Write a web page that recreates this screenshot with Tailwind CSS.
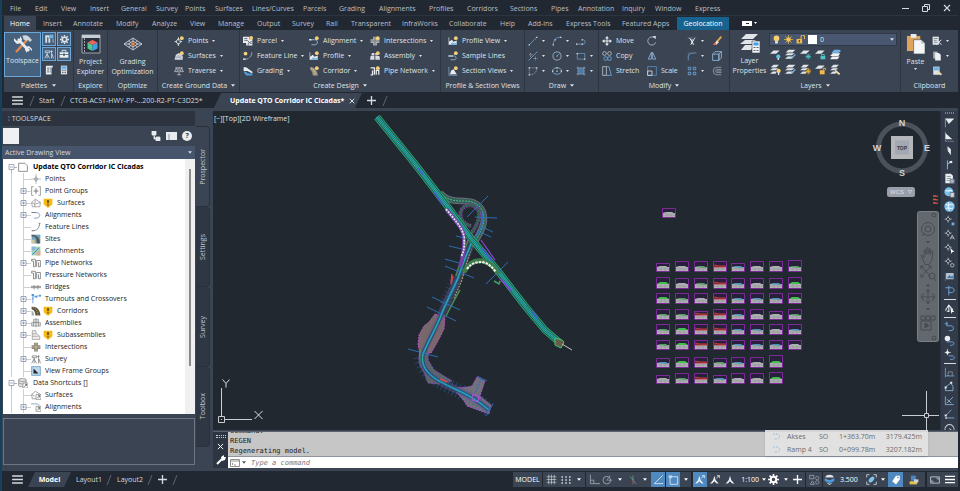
<!DOCTYPE html>
<html lang="en">
<head>
    <meta charset="UTF-8">
    <meta name="viewport" content="width=device-width, initial-scale=1.0">
    <title>Update QTO Corridor IC Cicadas</title>
    <script src="https://cdn.jsdelivr.net/npm/@tailwindcss/browser@4"></script>
</head>
<body class="bg-[#222832] font-['Open_Sans','Noto_Sans',sans-serif] text-[7px] leading-[10px] text-[#d5d9df]">

<!-- Icon library -->
<svg class="hidden">
    <symbol id="caret" viewBox="0 0 6 4"><path d="M0 0h6L3 4z" fill="currentColor"/></symbol>
    <symbol id="menu" viewBox="0 0 12 10"><path d="M0 1.2h12M0 5h12M0 8.8h12" stroke="currentColor" stroke-width="1.6"/></symbol>
    <symbol id="plus" viewBox="0 0 10 10"><path d="M5 0v10M0 5h10" stroke="currentColor" stroke-width="1.5"/></symbol>
    <symbol id="close" viewBox="0 0 8 8"><path d="M1 1l6 6M7 1L1 7" stroke="currentColor" stroke-width="1.1"/></symbol>
    <symbol id="slash" viewBox="0 0 6 10"><path d="M5 0L1 10" stroke="#5b6370" stroke-width="1"/></symbol>

    <symbol id="tools" viewBox="0 0 20 20"><path d="M3 18L14 6" stroke="#e0894b" stroke-width="2.4"/><path d="M9 2c4-2 7 0 8 2l2 2-2 2-2-2-2 1-3-2c1-1 0-2-1-3z" fill="#cfd5db"/><path d="M5 5l11 12" stroke="#e8ecef" stroke-width="2.6"/><path d="M1 4l3 3 3-1 0-4 2 3-1 4-4 1-3-3zM19 17l-3-3-2 1v4l-2-3 1-3 3-1 3 3z" fill="#e8ecef"/></symbol>
    <symbol id="panels" viewBox="0 0 16 16"><path d="M2 2v12h3V5h2v9h3V8h4v6h1V8H9V2z" fill="#d8dde2"/><path d="M9 1h6v6H9z" fill="#6fb1e2"/></symbol>
    <symbol id="gear" viewBox="0 0 16 16"><circle cx="8" cy="8" r="4" fill="none" stroke="currentColor" stroke-width="3"/><path d="M8 0v3M8 13v3M0 8h3M13 8h3M2.3 2.3l2.2 2.2M11.5 11.5l2.2 2.2M2.3 13.7l2.2-2.2M11.5 4.500l2.200-2.200" stroke="currentColor" stroke-width="2.4"/></symbol>
    <symbol id="survey" viewBox="0 0 16 16"><path d="M2 3h7v3H2zM5 6v2M5 8L1 15M5 8l4 7M5 8v7M12 2v13M10 4h4M13 8l2 7" stroke="currentColor" stroke-width="1.2" fill="none"/></symbol>
    <symbol id="toolbox" viewBox="0 0 16 16"><path d="M1 5h14v3H1zM1 9h14v5H1z" fill="#e8ecef"/><path d="M5 5V2h6v3" stroke="#e8ecef" stroke-width="1.5" fill="none"/><path d="M7 7h2v4H7z" fill="#3b4453"/></symbol>
    <symbol id="sheet" viewBox="0 0 16 16"><path d="M3 1h11v3h-2v11H3z" fill="#e8ecef"/><path d="M5 5h3M5 8h3M5 11h3M9 5h2M9 8h2M9 11h2" stroke="#4b5462" stroke-width="1.3"/></symbol>
    <symbol id="calc" viewBox="0 0 16 16"><path d="M3 1h10v14H3z" fill="#d8dde2"/><path d="M4 2h8v5H4z" fill="#6fb1e2"/><path d="M5 9h2M9 9h2M5 12h2M9 12h2" stroke="#4b5462" stroke-width="1.6"/></symbol>
    <symbol id="explorer" viewBox="0 0 20 20"><path d="M1 1h18v18H1z" fill="#2a313c" stroke="#9da5af"/><path d="M1 1h18v3H1z" fill="#c8cdd3"/><path d="M3.500 4v15" stroke="#9da5af" stroke-dasharray="2 1"/><path d="M11.500 6l5 2.500-5 2.500-5-2.500z" fill="#f0645a"/><path d="M6.500 8.500l5 2.500v6l-5-2.500z" fill="#4dc98a"/><path d="M16.500 8.500l-5 2.500v6l5-2.500z" fill="#3f9fe6"/></symbol>
    <symbol id="grading" viewBox="0 0 20 14"><path d="M10 1l9 6-9 6-9-6zM5.500 4l9 6M14.500 4l-9 6M10 1v12M1 7h18" fill="none" stroke="#c8cdd4" stroke-width=".9"/><path d="M10 4l4.500 3L10 10 5.500 7z" fill="#3b4453" stroke="#e9edf0" stroke-width=".8"/><circle cx="10" cy="7" r="1.800" fill="#f08a3c"/></symbol>

    <symbol id="points" viewBox="0 0 16 16"><path d="M7 4l4 5-4 5-4-5zM7 2v14M1 9h12" stroke="#d8dde2" stroke-width="1.5" fill="none"/><circle cx="7" cy="9" r="2" fill="#3b4453"/><circle cx="12.500" cy="3.500" r="3" fill="#f6cf7a"/></symbol>
    <symbol id="surfaces" viewBox="0 0 16 16"><path d="M1 14l2-8 5-3 6 5v6z" fill="#d8dde2"/><path d="M3 12c2-3 6-2 9 0M4 9c2-2 5-1 8 0" stroke="#7c8693" fill="none"/><circle cx="12.500" cy="3.500" r="3" fill="#f6cf7a"/></symbol>
    <symbol id="traverse" viewBox="0 0 16 16"><path d="M2 3h12M8 2v12M5 14h6M4 3L1 9h5zM12 3l-2 6h5z" stroke="#c8cdd4" stroke-width="1.200" fill="none"/></symbol>
    <symbol id="parcel" viewBox="0 0 16 16"><path d="M0 1h10v4h5v10H5v-4H0z" fill="#e8ecef"/><path d="M2 4h5M2 7h5c2 0 2 6 7 5M8 15c0-4 3-6 7-6" stroke="#4b5462" stroke-width="1.200" fill="none"/><circle cx="13" cy="3" r="3" fill="#f6cf7a"/></symbol>
    <symbol id="fline" viewBox="0 0 16 16"><path d="M1 13c7 1 12-3 13-9M14 2v2" stroke="#9fb4c8" stroke-width="1.400" stroke-dasharray="8 2" fill="none"/><circle cx="4" cy="4" r="3" fill="#f6cf7a"/><path d="M0 13h4" stroke="#e8ecef" stroke-width="2"/></symbol>
    <symbol id="gradingi" viewBox="0 0 16 16"><path d="M1 2l4 0 10 7v3L7 8H1z" fill="#e8ecef"/><path d="M1 9c3-1 5 2 8 3h6v3H5z" fill="#4b9ce0"/></symbol>
    <symbol id="align" viewBox="0 0 16 16"><path d="M1 6h8c6 0 6 8 0 8H4" stroke="#8fb7dc" stroke-width="1.500" fill="none"/><path d="M0 6h4" stroke="#e8ecef" stroke-width="2"/><circle cx="12.500" cy="3.500" r="3" fill="#f6cf7a"/></symbol>
    <symbol id="profile" viewBox="0 0 16 16"><path d="M1 2h1v7l4-3 3 3 5-2v7H1z" fill="#e8ecef"/><path d="M3 14l4-4 4 2 3-2v4z" fill="#6fb1e2"/><circle cx="12.500" cy="3.500" r="3" fill="#f6cf7a"/></symbol>
    <symbol id="corridor" viewBox="0 0 16 16"><path d="M2 2h3c5 2 9 7 9 13H6C6 10 4 7 2 6z" fill="#a39a82"/><path d="M3 3c5 2 7 7 7 12" stroke="#ecd9a0" stroke-dasharray="2 1.500" fill="none"/><circle cx="12.500" cy="3.500" r="3" fill="#f6cf7a"/></symbol>
    <symbol id="inter" viewBox="0 0 16 16"><path d="M5 1h6v4h4v6h-4v4H5v-4H1V5h4z" fill="#aeb2ae"/><path d="M8 1v14M1 8h14" stroke="#5d6570"/><circle cx="12.500" cy="3.500" r="3" fill="#f6cf7a"/></symbol>
    <symbol id="assembly" viewBox="0 0 16 16"><path d="M1 8h6v6H0zM8.500 8H15l1 6H8.500zM3 3h4v4H2zM8.500 3H12v4H8.500z" fill="#d8dde2"/><circle cx="12.500" cy="3.500" r="3" fill="#f6cf7a"/></symbol>
    <symbol id="pipe" viewBox="0 0 16 16"><path d="M1 3h6v11M4 7v7H1M10 14V7h4v7" stroke="#e8ecef" stroke-width="2" fill="none"/><circle cx="12.500" cy="3.500" r="3" fill="#f6cf7a"/></symbol>
    <symbol id="sline" viewBox="0 0 16 16"><path d="M0 8h10M4 14h6c4 0 4-6 0-6" stroke="#8fb7dc" stroke-width="1.400" fill="none"/><path d="M1 8h7" stroke="#e8ecef" stroke-width="1.500"/><circle cx="12.500" cy="3.500" r="3" fill="#f6cf7a"/></symbol>
    <symbol id="sview" viewBox="0 0 16 16"><path d="M1 1h1v13h13v1H1z" fill="#8fb7dc"/><path d="M3 13l2-6 4-2 5 8z" fill="#e8ecef"/><circle cx="12.500" cy="3.500" r="3" fill="#f6cf7a"/></symbol>

    <symbol id="d-line" viewBox="0 0 16 16"><path d="M2 14L14 2" stroke="#6fa3d4" stroke-width="1.200"/><path d="M1 13h2v2H1zM13 1h2v2h-2z" fill="#dfe4e9"/></symbol>
    <symbol id="d-arc" viewBox="0 0 16 16"><path d="M2 14C2 7 6 2 14 2" stroke="#6fa3d4" stroke-width="1.200" fill="none"/><path d="M1 13h2v2H1zM13 1h2v2h-2zM4 5h2v2H4z" fill="#dfe4e9"/></symbol>
    <symbol id="d-pline" viewBox="0 0 16 16"><path d="M1 13h10c5 0 5-7 0-7" stroke="#6fa3d4" stroke-width="1.300" fill="none"/><path d="M0 12h2v2H0zM9 12h2v2H9zM9 5h2v2H9z" fill="#dfe4e9"/></symbol>
    <symbol id="d-cons" viewBox="0 0 16 16"><path d="M1 15L15 1" stroke="#6fa3d4" stroke-width="1.300"/><path d="M2 6h6M4 3v6M9 12h6M12 9v6" stroke="#c8cdd4" stroke-dasharray="1.500 1"/></symbol>
    <symbol id="d-circle" viewBox="0 0 16 16"><circle cx="8" cy="8" r="6.500" fill="none" stroke="#b7c4d2" stroke-width="1.200"/><path d="M8 8l4-4" stroke="#6fa3d4" stroke-width="1.300"/><path d="M7 7h2v2H7z" fill="#6fb1e2"/></symbol>
    <symbol id="d-rect" viewBox="0 0 16 16"><path d="M2 4h12v9H2z" fill="none" stroke="#6fa3d4" stroke-width="1.100"/><path d="M1 3h2v2H1zM13 12h2v2h-2z" fill="#dfe4e9"/></symbol>
    <symbol id="d-poly" viewBox="0 0 16 16"><path d="M2 3h12c0 7-4 11-12 11z" fill="none" stroke="#8fa9c2" stroke-width="1.100" stroke-dasharray="3 1"/><path d="M1 2h2v2H1zM13 2h2v2h-2zM1 13h2v2H1z" fill="#dfe4e9"/></symbol>
    <symbol id="d-ell" viewBox="0 0 16 16"><ellipse cx="8" cy="8" rx="7" ry="5" fill="none" stroke="#8fb7dc" stroke-width="1.200"/><path d="M7 7h2v2H7zM7 2h2v2H7zM0 7h2v2H0zM14 7h2v2h-2z" fill="#dfe4e9"/></symbol>
    <symbol id="d-hatch" viewBox="0 0 16 16"><path d="M3 3h10v10H3z" fill="#4d7ba8"/><path d="M1 3h14M1 13h14M3 1v14M13 1v14" stroke="#c8cdd4" stroke-dasharray="1.500 1"/></symbol>

    <symbol id="m-move" viewBox="0 0 16 16"><path d="M8 3v10M3 8h10" stroke="#e8ecef" stroke-width="1.600"/><path d="M8 0l3 4H5zM8 16l3-4H5zM0 8l4-3v6zM16 8l-4-3v6z" fill="#e8ecef"/></symbol>
    <symbol id="m-copy" viewBox="0 0 16 16"><circle cx="4" cy="4" r="3" fill="none" stroke="#c8cdd4" stroke-width="1.200"/><circle cx="12" cy="4" r="3" fill="none" stroke="#c8cdd4" stroke-width="1.200"/><circle cx="6" cy="12" r="3" fill="none" stroke="#6fb1e2" stroke-width="1.300"/><circle cx="12" cy="12" r="3" fill="none" stroke="#6fb1e2" stroke-width="1.300"/></symbol>
    <symbol id="m-stretch" viewBox="0 0 16 16"><path d="M1 1h6v14H1z" fill="none" stroke="#c8cdd4" stroke-width="1.200"/><path d="M7 1h4l4 14H7" fill="none" stroke="#6fb1e2" stroke-width="1.300"/></symbol>
    <symbol id="m-rotate" viewBox="0 0 16 16"><path d="M12 3A6.500 6.500 0 1 0 14 10" fill="none" stroke="#a9bccf" stroke-width="1.400"/><path d="M9 0h5v5z" fill="#dfe4e9"/></symbol>
    <symbol id="m-mirror" viewBox="0 0 16 16"><path d="M7 2v11H2zM9 2v11h5z" fill="none" stroke="#8fb7dc" stroke-width="1.300"/></symbol>
    <symbol id="m-scale" viewBox="0 0 16 16"><path d="M1 1h14v14H1z" fill="none" stroke="#5f9bd2" stroke-width="1.100"/><path d="M1 8h7v7H1z" fill="none" stroke="#dfe4e9" stroke-width="1.300"/></symbol>
    <symbol id="m-trim" viewBox="0 0 16 16"><path d="M1 3h14" stroke="#8fa9c2" stroke-dasharray="2 1"/><path d="M4 3l7 11M12 4L6 14M8 5v8" stroke="#e8ecef" stroke-width="1.600"/></symbol>
    <symbol id="m-fillet" viewBox="0 0 16 16"><path d="M2 15V10C2 5 6 3 15 3" fill="none" stroke="#6fa3d4" stroke-width="1.300"/><path d="M2 9V3h6" stroke="#8b95a1" fill="none" stroke-dasharray="1.500 1"/></symbol>
    <symbol id="m-array" viewBox="0 0 16 16"><path d="M2 2h4v4H2zM10 2h4v4h-4zM2 10h4v4H2zM10 10h4v4h-4z" fill="none" stroke="#6fa3d4" stroke-width="1.400"/></symbol>
    <symbol id="m-erase" viewBox="0 0 16 16"><path d="M15 1L8 9" stroke="#e8a84c" stroke-width="3"/><path d="M8 7l3 3-4 4H2z" fill="#f1e4cf"/><path d="M1 14l4-4 2 4z" fill="#e2574c"/></symbol>
    <symbol id="m-box" viewBox="0 0 16 16"><path d="M1 5h10v10H1zM5 1h10v10l-4 4V5l4-4M1 5l4-4" fill="none" stroke="#8fb7dc" stroke-width="1.400"/></symbol>
    <symbol id="m-offset" viewBox="0 0 16 16"><path d="M15 2H8a6 6 0 0 0 0 12h7M15 5.500H8.500a2.500 2.500 0 0 0 0 5H15M15 8H8" fill="none" stroke="#a9b4c0" stroke-width="1.100"/></symbol>

    <symbol id="layerprops" viewBox="0 0 20 20"><path d="M6 1h12l-5 5H1zM5 7h11l-4 4H0zM5 12h9l-3 5H1z" fill="#e1e5e9"/><path d="M12 8h8v12h-8z" fill="#f2f4f6" stroke="#3b4453" stroke-width=".6"/><path d="M13.500 9.500h5v3h-5z" fill="#3f9fe6"/><path d="M13.500 14.500h2M16.500 14.500h2M13.500 17.500h2M16.500 17.500h2" stroke="#5d6570"/></symbol>
    <symbol id="bulb" viewBox="0 0 16 16"><circle cx="8" cy="6" r="5" fill="#f9d16c"/><path d="M5.500 11h5v4h-5z" fill="#e8ecef"/></symbol>
    <symbol id="sun" viewBox="0 0 16 16"><circle cx="8" cy="8" r="4" fill="#f7c552"/><path d="M8 0v16M0 8h16M2.500 2.500l11 11M13.500 2.500l-11 11" stroke="#f7c552" stroke-width="1.200"/></symbol>
    <symbol id="lock" viewBox="0 0 16 16"><path d="M1 7h10v8H1z" fill="#f2b84b"/><path d="M9 7V3a3 3 0 0 1 6 0v4" fill="none" stroke="#f2b84b" stroke-width="1.800"/><path d="M5 9h2v4H5z" fill="#3b4453"/></symbol>
    <symbol id="ly1" viewBox="0 0 16 16"><path d="M5 2h9l-5 5H0z" fill="#dfe4e9"/><circle cx="12" cy="11" r="3" fill="#5cc6e8"/><path d="M11 13h2v3h-2z" fill="#dfe4e9"/></symbol>
    <symbol id="ly2" viewBox="0 0 16 16"><path d="M5 1h10l-4 4H1zM4 6h10l-4 3H0zM4 11h9l-3 3H0z" fill="#dfe4e9"/><path d="M15 8l-6 6" stroke="#6fb1e2" stroke-width="2"/></symbol>
    <symbol id="ly3" viewBox="0 0 16 16"><path d="M5 2h9l-5 5H0z" fill="#dfe4e9"/><path d="M12 7v8M8 11h8M9 8l6 6M15 8l-6 6" stroke="#4fc3c7" stroke-width="1.300"/></symbol>
    <symbol id="ly4" viewBox="0 0 16 16"><path d="M5 2h9l-5 5H0z" fill="#dfe4e9"/><path d="M8 10h7v5H8z" fill="#4fc3c7"/><path d="M9.500 10V8h4v2" stroke="#4fc3c7" fill="none" stroke-width="1.300"/></symbol>
    <symbol id="ly5" viewBox="0 0 16 16"><path d="M6 1h8l2 2-4 3H2z" fill="#6fb1e2"/><path d="M4 6h11l-3 4H0zM3 11h11l-3 4H0z" fill="#f0f2f4"/></symbol>
    <symbol id="ly6" viewBox="0 0 16 16"><path d="M5 1h8l-4 4H1zM4 6h8l-4 3H0zM4 11h6l-2 3H0z" fill="#dfe4e9"/><circle cx="12.500" cy="10" r="3" fill="#f9d16c"/><path d="M11.500 12h2v4h-2z" fill="#dfe4e9"/></symbol>
    <symbol id="ly7" viewBox="0 0 16 16"><path d="M5 1h8l-4 4H1zM4 6h8l-4 3H0zM4 11h6l-2 3H0z" fill="#dfe4e9"/><path d="M12 6v9M8 10.500h8M9 7.500l6 6M15 7.500l-6 6" stroke="#f7b733" stroke-width="1.300"/></symbol>
    <symbol id="ly8" viewBox="0 0 16 16"><path d="M5 2h9l-5 5H0z" fill="#dfe4e9"/><path d="M7 9h7v6H7z" fill="#f2b84b"/><path d="M12 9V6h3v3" stroke="#f2b84b" fill="none" stroke-width="1.300"/></symbol>
    <symbol id="ly9" viewBox="0 0 16 16"><path d="M5 1h8l-4 4H1zM4 6h8l-4 3H0zM4 11h6l-2 3H0z" fill="#dfe4e9"/><path d="M8 8l7 6-2 2-6-5z" fill="#f0dca8"/></symbol>
    <symbol id="paste" viewBox="0 0 20 22"><path d="M1 3h14v16H1z" fill="#dca45c"/><path d="M5 1h6v4H5z" fill="#e8ecef"/><path d="M8 7h8l4 4v11H8z" fill="#f3f5f7" stroke="#3b4453" stroke-width=".6"/><path d="M16 7v4h4z" fill="#b9c0c8"/></symbol>
    <symbol id="cut" viewBox="0 0 16 16"><path d="M1 1h10v13H1z" fill="#dfe4e9"/><path d="M3 4h6M3 7h6M3 10h6" stroke="#59626f"/><path d="M7 6l8 8M15 6l-8 8" stroke="#e8ecef" stroke-width="1.600"/></symbol>
    <symbol id="copyclip" viewBox="0 0 16 16"><path d="M2 1h7v11H2z" fill="#aeb5bd"/><path d="M5 3h6l3 3v9H5z" fill="#eef0f2"/></symbol>
    <symbol id="matchp" viewBox="0 0 16 16"><path d="M2 1h10v13H2z" fill="#dfe4e9"/><path d="M3 2h8v5H3z" fill="#6fb1e2"/><path d="M7 10l4-2 5 5-2 2z" fill="#f0dca8"/></symbol>

    <!-- Tree connectors -->
    <symbol id="t-root" viewBox="0 0 15 12"><path d="M9 6.500h5M8.500 9v3" stroke="#b4b4b4"/><path d="M6 3.500h5v5H6zM7 6h3" fill="#fff" stroke="#8d98a8" stroke-width=".8"/></symbol>
    <symbol id="t-box" viewBox="0 0 28 12"><path d="M20.500 0v12M23 6.500h5M8.500 0v12" stroke="#cfcfcf"/><path d="M18 3.500h5v5h-5zM19 6h3M20.500 4.500v3" fill="#fff" stroke="#7f8ea6" stroke-width=".8"/></symbol>
    <symbol id="t-leaf" viewBox="0 0 28 12"><path d="M20.500 0v12M20.500 6.500H28M8.500 0v12" stroke="#cfcfcf"/></symbol>
    <symbol id="x-doc" viewBox="0 0 16 16"><path d="M1 2h10l4 4v9H1z" fill="#fff" stroke="#7a7a7a" stroke-width="1.300"/></symbol>
    <symbol id="x-points" viewBox="0 0 16 16"><path d="M8 0v16M0 8h16" stroke="#999"/><path d="M8 3l4 5-4 5-4-5z" fill="#b0b0b0"/></symbol>
    <symbol id="x-group" viewBox="0 0 16 16"><path d="M4 1H1v14h3M12 1h3v14h-3M8 3v10M4 8h8" fill="none" stroke="#777" stroke-width="1.100"/><path d="M8 5l3 3-3 3-3-3z" fill="#999"/></symbol>
    <symbol id="x-surf" viewBox="0 0 16 16"><path d="M1 7l6-5 8 5-1 7H2zM1 7l5 3 9-3M6 10v4M7 2l-1 8" fill="none" stroke="#888" stroke-width="1.100"/></symbol>
    <symbol id="x-align" viewBox="0 0 16 16"><path d="M1 4h7c8 0 8 9 0 9H5" fill="none" stroke="#6b8db4" stroke-width="1.300"/><path d="M1 4h6" stroke="#777" stroke-width="1.300"/></symbol>
    <symbol id="x-fline" viewBox="0 0 16 16"><path d="M2 14c8 0 11-4 12-12M12 2h3M1 14h3" fill="none" stroke="#777" stroke-width="1.300"/></symbol>
    <symbol id="x-site" viewBox="0 0 16 16"><path d="M1 1h14v14H1z" fill="#6aa6cf"/><path d="M1 4c6-1 9 3 8 11h5C15 7 10 1 1 1z" fill="#5c5848"/><path d="M1 9h5v6H1z" fill="#d9c79b"/></symbol>
    <symbol id="x-catch" viewBox="0 0 16 16"><path d="M1 1h14v14H1z" fill="#9fd0c0"/><path d="M1 1h6c2 4-2 5-6 7z" fill="#8cb6e0"/><path d="M9 15c-1-5 2-8 6-8v8z" fill="#e7a98c"/><path d="M2 14L13 3" stroke="#3c76b0" stroke-width="1.200"/></symbol>
    <symbol id="x-pipe" viewBox="0 0 16 16"><path d="M1 2h6v12H4V5H1zM9 14V4h6v10h-3V7" fill="none" stroke="#777" stroke-width="1.300"/></symbol>
    <symbol id="x-bridge" viewBox="0 0 16 16"><path d="M0 7h16M0 9h16M5 5v7M11 5v7" stroke="#888" stroke-width="1.400"/></symbol>
    <symbol id="x-turn" viewBox="0 0 16 16"><path d="M3 15V8c0-4 4-5 12-5M3 1v8" fill="none" stroke="#5596d6" stroke-width="1.300"/><path d="M1 0h4v3H1zM7 3h3v3H7zM13 1h3v3h-3z" fill="#5596d6"/></symbol>
    <symbol id="x-corr" viewBox="0 0 16 16"><path d="M1 1h4c6 1 10 7 10 14H7C7 10 5 6 1 5z" fill="#5e5642"/><path d="M1 7c3 2 4 5 4 8H1z" fill="#aaa"/><path d="M3 2c5 2 8 7 8 13" fill="none" stroke="#e6c65c" stroke-dasharray="2 1.500"/></symbol>
    <symbol id="x-asm" viewBox="0 0 16 16"><path d="M4 2h8v5H4zM1 7h14v6H1zM8 0v15M4 7v6M12 7v6" fill="#ddd" stroke="#888"/></symbol>
    <symbol id="x-sub" viewBox="0 0 16 16"><path d="M2 1h6v4l6 5v5H2zM2 6h6M2 10h10" fill="#eee" stroke="#888"/></symbol>
    <symbol id="x-inter" viewBox="0 0 16 16"><path d="M5 1h6v4h4v6h-4v4H5v-4H1V5h4z" fill="#8b8676"/><path d="M8 1v14M1 8h14" stroke="#d8ceb0"/></symbol>
    <symbol id="x-frame" viewBox="0 0 16 16"><path d="M1 1h14v14H1z" fill="#bcd9ee" stroke="#4c86b8"/><path d="M4 4l8 8H4z" fill="#222"/></symbol>
    <symbol id="x-data" viewBox="0 0 16 16"><path d="M1 3c0-3 12-3 12 0v9c0 3-12 3-12 0z" fill="#e3e3e3" stroke="#777"/><path d="M1 4c2 2 10 2 12 0M1 8c2 2 10 2 12 0" fill="none" stroke="#777"/><path d="M8 8h8v8H8z" fill="#fff" stroke="#777"/><path d="M10 14l4-4M11 10h3v3" stroke="#333" fill="none"/></symbol>
    <symbol id="x-surf2" viewBox="0 0 16 16"><path d="M1 7l6-5 8 5-1 7H2zM1 7l5 3" fill="none" stroke="#777"/><path d="M8 7h8v8H8z" fill="#fff" stroke="#777"/><path d="M10 13l4-4M11 9h3v3" stroke="#333" fill="none"/></symbol>
    <symbol id="x-align2" viewBox="0 0 16 16"><path d="M0 3h8c4 0 5 2 5 4" fill="none" stroke="#6b8db4" stroke-width="1.200"/><path d="M8 7h8v8H8z" fill="#fff" stroke="#777"/><path d="M10 13l4-4M11 9h3v3" stroke="#333" fill="none"/></symbol>
    <symbol id="warn" viewBox="0 0 16 16"><path d="M1 1h14v9l-7 6-7-6z" fill="#f6b913"/><path d="M8 3v5.500M8 10v2" stroke="#222" stroke-width="1.900"/></symbol>

    <!-- Drafting strip -->
    <symbol id="r-flag" viewBox="0 0 16 16"><path d="M2 2h13L7 10z" fill="#e8ecef"/><path d="M2 2v13" stroke="#6fa3d4" stroke-width="1.300"/></symbol>
    <symbol id="r-flag2" viewBox="0 0 16 16"><path d="M2 3l10 9H2z" fill="#e8ecef"/><path d="M2 1v14h13" stroke="#a9b4c0" stroke-dasharray="2 1" fill="none"/></symbol>
    <symbol id="r-nib" viewBox="0 0 16 16"><path d="M6 2l4 4v9L6 9z" fill="#e8ecef"/><path d="M5 2v6" stroke="#6fa3d4" stroke-width="1.300"/></symbol>
    <symbol id="r-wand" viewBox="0 0 16 16"><path d="M5 2v13M5 8l6-5" stroke="#8fb7dc" stroke-width="1.400"/><path d="M8 3h4v3H8z" fill="#e8ecef"/></symbol>
    <symbol id="r-page" viewBox="0 0 16 16"><path d="M2 1h8l3 3v11H2z" fill="#eceff1"/><path d="M4 5h6M4 8h6M4 11h4" stroke="#68727f"/><path d="M9 9h6v6H9z" fill="#a9b4c0" stroke="#59626f"/></symbol>
    <symbol id="r-globe" viewBox="0 0 16 16"><circle cx="8" cy="8" r="7.500" fill="#7cc3ee"/><path d="M2 5c4 3 8-2 12 1M3 11c3-3 7 2 10-1M6 2c2 3-1 9 2 12" stroke="#fff" fill="none" stroke-width="1.300"/></symbol>
    <symbol id="r-globe2" viewBox="0 0 16 16"><circle cx="7" cy="7" r="6.500" fill="#7cc3ee"/><path d="M2 5c4 3 7-2 10 1" stroke="#fff" fill="none" stroke-width="1.500"/><path d="M9 8h6v7H9z" fill="#cfd5db" stroke="#59626f"/></symbol>
    <symbol id="r-pt" viewBox="0 0 16 16"><path d="M6 1v10M1 6h10" stroke="#d8dde2"/><path d="M6 3l3 3-3 3-3-3z" fill="#2f3746" stroke="#d8dde2"/><path d="M11 11h4v4h-4z" fill="#6fb1e2"/></symbol>
    <symbol id="r-pta" viewBox="0 0 16 16"><path d="M6 1v10M1 6h10" stroke="#d8dde2"/><path d="M6 3l3 3-3 3-3-3z" fill="#2f3746" stroke="#d8dde2"/><path d="M9 15l3-6 3 6M10 13h4" stroke="#d8dde2" fill="none"/></symbol>
    <symbol id="r-ptc" viewBox="0 0 16 16"><path d="M6 1v10M1 6h10" stroke="#d8dde2"/><path d="M6 3l3 3-3 3-3-3z" fill="#2f3746" stroke="#d8dde2"/><path d="M9 7l6 6-3 0-1 3z" fill="#fff"/></symbol>
    <symbol id="r-ptq" viewBox="0 0 16 16"><path d="M6 1v10M1 6h10" stroke="#d8dde2"/><path d="M6 3l3 3-3 3-3-3z" fill="#2f3746" stroke="#d8dde2"/><circle cx="12" cy="12" r="2.500" fill="none" stroke="#d8dde2"/></symbol>
    <symbol id="r-img" viewBox="0 0 16 16"><path d="M3 3h11v9H3z" fill="#b8c6d4"/><path d="M5 10l3-4 2 3 2-2 2 3zM2 3v12" stroke="#4b78a8" fill="#4b78a8"/></symbol>
    <symbol id="r-prof" viewBox="0 0 16 16"><path d="M2 4h9c5 0 5 7 0 7H7M7 1v14" stroke="#6fa3d4" fill="none" stroke-width="1.400"/></symbol>
    <symbol id="r-asm" viewBox="0 0 16 16"><path d="M2 11l5-8 6 7M4 12h4M7 3v10" stroke="#e8ecef" fill="none" stroke-width="1.500"/><path d="M9 7l6 6-3 0-1 3z" fill="#fff"/></symbol>
    <symbol id="r-undo" viewBox="0 0 16 16"><path d="M4 1v6h6c5 0 5 7 0 7H7M1 4h5" stroke="#6fa3d4" fill="none" stroke-width="1.400"/></symbol>
    <symbol id="r-dot" viewBox="0 0 16 16"><circle cx="5" cy="5" r="4" fill="#e8ecef"/><path d="M4 10h7c5 0 4 5 0 5H9" stroke="#6fa3d4" fill="none" stroke-width="1.400"/></symbol>
    <symbol id="r-ptl" viewBox="0 0 16 16"><path d="M5 0v9M1 5h9" stroke="#e8ecef"/><path d="M5 2l3 3-3 3-3-3z" fill="#e8ecef"/><path d="M7 10h5c4 0 4 5 0 5H9" stroke="#6fa3d4" fill="none" stroke-width="1.400"/></symbol>
    <symbol id="r-base" viewBox="0 0 16 16"><path d="M2 1v14M2 13h13" stroke="#6fa3d4" stroke-width="1.200"/><path d="M6 13V7h6v6" stroke="#c8cdd4" fill="none" stroke-dasharray="2 1"/></symbol>
    <symbol id="r-tri" viewBox="0 0 16 16"><path d="M2 14V9l8-6 3 5v6z" fill="none" stroke="#8fb7dc" stroke-width="1.200"/><path d="M9 1h3v3H9zM1 8h3v3H1z" fill="#e8ecef"/></symbol>
    <symbol id="r-sl" viewBox="0 0 16 16"><path d="M2 2v12h12M4 12L13 3M4 6l7 6" fill="none" stroke="#8fb7dc" stroke-width="1.200"/></symbol>
    <symbol id="r-ln" viewBox="0 0 16 16"><path d="M3 9l8-8M3 13h12" stroke="#8fb7dc" stroke-width="1.200"/><path d="M1 8h3v3H1zM2 12h2v2H2z" fill="#e8ecef"/></symbol>
    <symbol id="r-dial" viewBox="0 0 16 16"><path d="M3 13a6.500 6.500 0 1 1 10 0M8 8l3 3" fill="none" stroke="#c8cdd4" stroke-width="1.500"/><path d="M9 11h5v4H9z" fill="#e8ecef"/></symbol>

    <!-- Status bar -->
    <symbol id="s-grid" viewBox="0 0 16 16"><path d="M4 1v14M8 1v14M12 1v14M1 4h14M1 8h14M1 12h14" stroke="#c8cdd4" stroke-width="1"/></symbol>
    <symbol id="s-snap" viewBox="0 0 16 16"><path d="M2 3h2v2H2zM7 3h2v2H7zM12 3h2v2h-2zM2 7h2v2H2zM7 7h2v2H7zM12 7h2v2h-2zM2 11h2v2H2zM7 11h2v2H7zM12 11h2v2h-2z" fill="#d8dde2"/></symbol>
    <symbol id="s-ortho" viewBox="0 0 16 16"><path d="M2 1v13h14M2 9h5v5" fill="none" stroke="#9aa3ae" stroke-width="1.300"/></symbol>
    <symbol id="s-polar" viewBox="0 0 16 16"><circle cx="7" cy="9" r="5.500" fill="none" stroke="#9aa3ae" stroke-width="1.300"/><path d="M7 9h8M7 9l5-7" stroke="#9aa3ae"/></symbol>
    <symbol id="s-iso" viewBox="0 0 16 16"><path d="M3 2l10 12" stroke="#8a929d" stroke-width="1.200"/><path d="M8 1v7" stroke="#54b078" stroke-width="1.400"/><path d="M8 8v7" stroke="#b85a5a" stroke-width="1.400"/></symbol>
    <symbol id="s-track" viewBox="0 0 16 16"><path d="M2 14L14 2M2 14h13" stroke="#e4edf6" stroke-width="1.200"/></symbol>
    <symbol id="s-osnap" viewBox="0 0 16 16"><path d="M3 4h11v11H3z" fill="none" stroke="#e4edf6" stroke-width="1.200"/><path d="M1 2h5v4H1z" fill="#b9d8f2"/></symbol>
    <symbol id="s-ann" viewBox="0 0 16 16"><path d="M8 1l2 7 5 6-4-1-3-3-3 3-4 1 5-6z" fill="#eef1f4"/></symbol>
    <symbol id="s-ann2" viewBox="0 0 16 16"><path d="M7 1l2 7 5 6-4-1-3-3-3 3-4 1 5-6z" fill="#eef1f4"/><path d="M10 5l5-4M11 1h4v4" stroke="#eef1f4" stroke-width="1.200" fill="none"/></symbol>
    <symbol id="s-units" viewBox="0 0 16 16"><path d="M1 2h6v5H1zM5 10l3 5H2z" fill="none" stroke="#9aa3ae" stroke-width="1.200"/><circle cx="12" cy="6" r="2.500" fill="none" stroke="#9aa3ae"/><circle cx="12" cy="12" r="2.500" fill="none" stroke="#9aa3ae"/></symbol>
    <symbol id="s-elev" viewBox="0 0 16 16"><path d="M8 1c4 0 6 2 6 4H2c0-2 2-4 6-4z" fill="#dfe4e9"/><path d="M1 6l7 3 7-3v4l-7 3-7-3z" fill="#4b9ce0"/><path d="M3 12l5 2 5-2-5 4z" fill="#dfe4e9"/></symbol>
    <symbol id="s-iso2" viewBox="0 0 16 16"><path d="M1 5V1h4M11 1h4v4M1 11v4h4M15 11v4h-4" fill="none" stroke="#d8dde2" stroke-width="1.200"/><ellipse cx="8" cy="8" rx="5" ry="3" transform="rotate(-45 8 8)" fill="#7cc3ee"/></symbol>
    <symbol id="s-tag" viewBox="0 0 16 16"><path d="M8 1h6v6l-6 8-6-5z" fill="#fff"/><circle cx="11" cy="4" r="1.300" fill="#5089bf"/></symbol>
    <symbol id="s-cloud" viewBox="0 0 16 16"><path d="M3 1h8v8H3z" fill="#4b86c0"/><path d="M1 10h12v5H1z" fill="#e3c34d"/><path d="M8 7h7v5H8z" fill="#c9d2db"/></symbol>
    <symbol id="s-full" viewBox="0 0 16 12"><path d="M1 1h14v10H1z" fill="none" stroke="#d8dde2" stroke-width="1.200"/><path d="M3 6v3h3M10 3h3v3" fill="none" stroke="#d8dde2"/></symbol>
</svg>

<div class="min-h-screen flex flex-col border-l-2 border-[#17405c] pr-[2px]">

    <!-- Menu bar -->
    <header class="h-4 flex items-center pl-2 border-b border-[#2c3440] text-[#b9bfc8] leading-[15px]">
        <nav id="menu-bar" class="flex-1 flex whitespace-nowrap pt-px">
            <button class="w-[25px] text-left">File</button>
            <button class="w-[26px] text-left">Edit</button>
            <button class="w-[29px] text-left">View</button>
            <button class="w-[31px] text-left">Insert</button>
            <button class="w-[35px] text-left">General</button>
            <button class="w-[29px] text-left">Survey</button>
            <button class="w-[30px] text-left">Points</button>
            <button class="w-[37px] text-left">Surfaces</button>
            <button class="w-[51px] text-left">Lines/Curves</button>
            <button class="w-[36px] text-left">Parcels</button>
            <button class="w-[40px] text-left">Grading</button>
            <button class="w-[50px] text-left">Alignments</button>
            <button class="w-[38px] text-left">Profiles</button>
            <button class="w-[43px] text-left">Corridors</button>
            <button class="w-[41px] text-left">Sections</button>
            <button class="w-[27px] text-left">Pipes</button>
            <button class="w-[44px] text-left">Annotation</button>
            <button class="w-[33px] text-left">Inquiry</button>
            <button class="w-[40px] text-left">Window</button>
            <button class="text-left">Express</button>
        </nav>
        <div class="flex items-center gap-[13px] pr-[7px] text-[#d5d9df]">
            <button aria-label="Minimize"><svg class="w-[7px] h-2" viewBox="0 0 7 8"><path d="M0 4.500h7" stroke="currentColor"/></svg></button>
            <button aria-label="Restore"><svg class="size-2" viewBox="0 0 8 8"><path d="M.5 2.500h5v5h-5zM2.500 2V.5h5v5H6" fill="none" stroke="currentColor"/></svg></button>
            <button aria-label="Close"><svg class="size-2"><use href="#close"/></svg></button>
        </div>
    </header>

    <!-- Ribbon tabs -->
    <nav class="h-[14px] flex items-stretch pl-[2px] whitespace-nowrap leading-[15px] text-[#b9bfc8]">
        <button class="w-8 mr-[7px] bg-[#3b4453] text-white">Home</button>
        <button class="w-[30px] text-left">Insert</button>
        <button class="w-[43px] text-left">Annotate</button>
        <button class="w-[36px] text-left">Modify</button>
        <button class="w-[38px] text-left">Analyze</button>
        <button class="w-[28px] text-left">View</button>
        <button class="w-[39px] text-left">Manage</button>
        <button class="w-[35px] text-left">Output</button>
        <button class="w-[34px] text-left">Survey</button>
        <button class="w-[25px] text-left">Rail</button>
        <button class="w-[51px] text-left">Transparent</button>
        <button class="w-[47px] text-left">InfraWorks</button>
        <button class="w-[51px] text-left">Collaborate</button>
        <button class="w-[28px] text-left">Help</button>
        <button class="w-[38px] text-left">Add-ins</button>
        <button class="w-[56px] text-left">Express Tools</button>
        <button class="w-[55px] text-left">Featured Apps</button>
        <button class="w-[52px] mt-px bg-[#17638f] text-white leading-[13px]">Geolocation</button>
        <button class="ml-[13px] flex items-center gap-[2px]" aria-label="Ribbon display">
            <span class="w-[10px] h-[5px] bg-white flex items-center justify-center"><span class="w-[3px] h-px bg-[#222832]"></span></span>
            <svg class="w-[3px] h-[2px] text-white"><use href="#caret"/></svg>
        </button>
    </nav>

    <!-- Ribbon -->
    <section class="flex bg-[#3b4453] ml-[2px] text-[#dfe3e8] whitespace-nowrap">
        <div class="w-[70px] border-r border-[#2d3542] flex flex-col">
            <div class="h-[49px] pt-[2px] flex">
                <button class="w-[37px] h-[45px] bg-[#45617d] border border-[#6aa6d8] flex flex-col items-center">
                    <svg class="size-5 mt-px"><use href="#tools"/></svg>
                    <span class="mt-[2px]">Toolspace</span>
                </button>
                <div class="grid grid-cols-2 auto-rows-[15px] gap-x-px pl-px">
                    <button class="w-[14px] h-[14px] bg-[#45617d] border border-[#6aa6d8] flex items-center justify-center" aria-label="Panels"><svg class="size-[10px]"><use href="#panels"/></svg></button>
                    <button class="w-[14px] h-[14px] bg-[#45617d] border border-[#6aa6d8] flex items-center justify-center" aria-label="Settings"><svg class="size-[9px]"><use href="#gear"/></svg></button>
                    <button class="w-[14px] h-[14px] bg-[#45617d] border border-[#6aa6d8] flex items-center justify-center" aria-label="Survey"><svg class="size-[10px]"><use href="#survey"/></svg></button>
                    <button class="w-[14px] h-[14px] bg-[#45617d] border border-[#6aa6d8] flex items-center justify-center" aria-label="Toolbox"><svg class="size-[10px]"><use href="#toolbox"/></svg></button>
                    <button class="w-[14px] h-4 flex items-center justify-center" aria-label="Sheets"><svg class="size-[10px]"><use href="#sheet"/></svg></button>
                    <button class="w-[14px] h-4 flex items-center justify-center" aria-label="Calculator"><svg class="size-[10px]"><use href="#calc"/></svg></button>
                </div>
            </div>
            <button class="h-[13px] flex items-center justify-center gap-[5px]">Palettes <svg class="w-1 h-[3px]"><use href="#caret"/></svg></button>
        </div>

        <div class="w-[34px] border-r border-[#2d3542] flex flex-col">
            <button class="h-[49px] pt-1 flex flex-col items-center"><svg class="size-5"><use href="#explorer"/></svg><span class="mt-[3px]">Project<br>Explorer</span></button>
            <div class="h-[13px] leading-[13px] text-center">Explore</div>
        </div>

        <div class="w-[50px] border-r border-[#2d3542] flex flex-col">
            <button class="h-[49px] pt-1 flex flex-col items-center"><svg class="w-5 h-[14px] my-[3px]"><use href="#grading"/></svg><span class="mt-[3px]">Grading<br>Optimization</span></button>
            <div class="h-[13px] leading-[13px] text-center">Optimize</div>
        </div>

        <div class="w-[82px] border-r border-[#2d3542] flex flex-col">
            <div class="h-[49px] pt-[3px] pl-4" data-tools="points:Points:v surfaces:Surfaces:v traverse:Traverse:v"></div>
            <button class="h-[13px] flex items-center justify-center gap-1">Create Ground Data <svg class="w-1 h-[3px]"><use href="#caret"/></svg></button>
        </div>

        <div class="w-[201px] border-r border-[#2d3542] flex flex-col">
            <div class="h-[49px] pt-[3px] pl-[3px] flex">
                <div class="w-[66px]" data-tools="parcel:Parcel:v fline:Feature_Line:v gradingi:Grading:v"></div>
                <div class="w-[61px]" data-tools="align:Alignment:v profile:Profile:v corridor:Corridor:v"></div>
                <div data-tools="inter:Intersections:v assembly:Assembly:v pipe:Pipe_Network:v"></div>
            </div>
            <button class="h-[13px] flex items-center justify-center gap-1">Create Design <svg class="w-1 h-[3px]"><use href="#caret"/></svg></button>
        </div>

        <div class="w-[84px] border-r border-[#2d3542] flex flex-col">
            <div class="h-[49px] pt-[3px] pl-[7px]" data-tools="profile:Profile_View:v sline:Sample_Lines sview:Section_Views:v"></div>
            <div class="h-[13px] leading-[13px] text-center">Profile &amp; Section Views</div>
        </div>

        <div class="w-[74px] border-r border-[#2d3542] flex flex-col">
            <div class="h-[49px] pt-[3px] pl-[3px] flex">
                <div class="w-6" data-tools="d-line::v d-cons::v d-poly::v"></div>
                <div class="w-6" data-tools="d-arc::v d-circle::v d-ell::v"></div>
                <div data-tools="d-pline: d-rect::v d-hatch::v"></div>
            </div>
            <button class="h-[13px] flex items-center justify-center gap-1">Draw <svg class="w-1 h-[3px]"><use href="#caret"/></svg></button>
        </div>

        <div class="w-[131px] border-r border-[#2d3542] flex flex-col">
            <div class="h-[49px] pt-[3px] pl-[3px] flex">
                <div class="w-[45px]" data-tools="m-move:Move m-copy:Copy m-stretch:Stretch"></div>
                <div class="w-10" data-tools="m-rotate: m-mirror: m-scale:Scale"></div>
                <div class="w-[25px]" data-tools="m-trim::v m-fillet::v m-array::v"></div>
                <div data-tools="m-erase: m-box: m-offset:"></div>
            </div>
            <button class="h-[13px] flex items-center justify-center gap-1">Modify <svg class="w-1 h-[3px]"><use href="#caret"/></svg></button>
        </div>

        <div class="w-[171px] border-r border-[#2d3542] flex flex-col">
            <div class="h-[49px] pt-[3px] flex">
                <button class="w-[39px] flex flex-col items-center"><svg class="size-5"><use href="#layerprops"/></svg><span class="mt-[3px]">Layer<br>Properties</span></button>
                <div class="flex-1 pr-[3px]">
                    <div class="relative h-[13px] bg-[#4a5770] border border-[#2f3847] flex items-center gap-[3px] pl-[2px]">
                        <svg class="size-[9px]"><use href="#bulb"/></svg>
                        <svg class="size-[9px]"><use href="#sun"/></svg>
                        <svg class="size-[9px]"><use href="#lock"/></svg>
                        <span class="size-[9px] bg-white"></span>
                        <select class="flex-1 h-[10px] leading-[10px] appearance-none bg-transparent" aria-label="Layer"><option>0</option></select>
                        <svg class="w-1 h-[3px] mr-[2px]"><use href="#caret"/></svg>
                    </div>
                    <div class="flex gap-1 mt-[3px] pl-px" data-icons="ly1 ly2 ly3 ly4 ly5"></div>
                    <div class="flex gap-1 mt-1 pl-px" data-icons="ly6 ly2 ly7 ly8 ly9"></div>
                </div>
            </div>
            <button class="h-[13px] flex items-center justify-center gap-1">Layers <svg class="w-1 h-[3px]"><use href="#caret"/></svg></button>
        </div>

        <div class="flex-1 flex flex-col">
            <div class="h-[49px] pt-[3px] pl-[5px] flex gap-[7px]">
                <button class="flex flex-col items-center"><svg class="w-[19px] h-[21px]"><use href="#paste"/></svg><span class="mt-[3px]">Paste</span><svg class="w-[3px] h-[2px] mt-px"><use href="#caret"/></svg></button>
                <div data-tools="cut::v copyclip::v matchp:"></div>
            </div>
            <div class="h-[13px] leading-[13px] text-center">Clipboard</div>
        </div>
    </section>

    <!-- Drawing tabs -->
    <nav class="h-4 flex items-center pl-[10px] pt-px whitespace-nowrap text-[#d5d9df]">
        <button aria-label="Start menu"><svg class="w-[11px] h-[9px]"><use href="#menu"/></svg></button>
        <svg class="w-[6px] h-[10px] ml-[6px]"><use href="#slash"/></svg>
        <button class="w-[21px] ml-1 text-left">Start</button>
        <svg class="w-[6px] h-[10px]"><use href="#slash"/></svg>
        <button class="w-[144px] ml-1 text-left">CTCB-ACST-HWY-PP-...200-R2-PT-C3D25*</button>
        <div class="w-[148px] h-[15px] pl-4 pr-[7px] flex items-center justify-between bg-[#3b4453] text-white font-bold [clip-path:polygon(7px_0,100%_0,141px_100%,0_100%)]">
            <button class="font-bold">Update QTO Corridor IC Cicadas*</button>
            <button aria-label="Close tab"><svg class="size-[6px]"><use href="#close"/></svg></button>
        </div>
        <button class="ml-[5px]" aria-label="New drawing"><svg class="size-[9px]"><use href="#plus"/></svg></button>
        <svg class="w-[6px] h-[10px] ml-[6px]"><use href="#slash"/></svg>
    </nav>

    <main class="flex-1 flex bg-[#3b4453] pt-[3px]">

        <!-- Toolspace palette -->
        <aside class="w-[208px] flex flex-col">
            <div class="flex-1 flex">
                <div class="w-[194px] flex flex-col">
                    <h2 class="h-[15px] leading-[15px] pl-[6px] bg-[#2d3440]"><span class="text-[#77808c]">⁞</span> TOOLSPACE</h2>
                    <div class="h-[20px] flex items-end justify-between pl-px pr-[3px]">
                        <div class="w-4 h-4 mb-[2px] bg-[#eef0f2]"></div>
                        <div class="flex items-center gap-[5px] pb-[5px]">
                            <svg class="size-[10px]" viewBox="0 0 10 10"><path d="M1 0h4v4H1zM5 6h4v4H5zM3 4v4h2" fill="#e8ecef" stroke="#e8ecef" stroke-width=".8"/></svg>
                            <svg class="w-[11px] h-2" viewBox="0 0 11 8"><path d="M0 0h11v8H0z" fill="#e8ecef"/><path d="M3 2v6" stroke="#8a93a0"/></svg>
                            <span class="size-[10px] rounded-full bg-[#e8ecef] text-[#2d3440] text-center font-bold">?</span>
                        </div>
                    </div>
                    <div class="h-[13px] flex items-center justify-between bg-[#46556c] pl-[3px] pr-[3px]">
                        <select class="flex-1 h-[12px] leading-[12px] appearance-none bg-transparent" aria-label="View"><option>Active Drawing View</option></select>
                        <svg class="w-1 h-[3px]"><use href="#caret"/></svg>
                    </div>
                    <div class="flex-1 flex bg-white text-black ml-px overflow-hidden">
                        <ul id="tree" class="flex-1 pt-[2px] whitespace-nowrap text-[#1c1c1c]"></ul>
                        <div class="w-[10px] bg-[#f0f0f0] pt-[10px] flex justify-center"><div class="w-[2px] h-[197px] bg-[#8a8a8a]"></div></div>
                    </div>
                    <div class="h-[47px] ml-px mt-1 border border-[#6c7583]"></div>
                </div>
                <div class="w-[14px] mt-[15px] mb-[18px] ml-px flex flex-col text-[#c3c8d0]">
                    <button class="flex-1 bg-[#3b4453] border-r border-y border-[#2a313d] rounded-r-sm flex items-center justify-center"><span class="[writing-mode:vertical-rl] rotate-180">Prospector</span></button>
                    <button class="flex-1 bg-[#2f3745] border-r border-b border-[#2a313d] rounded-r-sm flex items-center justify-center"><span class="[writing-mode:vertical-rl] rotate-180">Settings</span></button>
                    <button class="flex-1 bg-[#2f3745] border-r border-b border-[#2a313d] rounded-r-sm flex items-center justify-center"><span class="[writing-mode:vertical-rl] rotate-180">Survey</span></button>
                    <button class="flex-1 bg-[#2f3745] border-r border-b border-[#2a313d] rounded-r-sm flex items-center justify-center"><span class="[writing-mode:vertical-rl] rotate-180">Toolbox</span></button>
                </div>
            </div>
            <div class="h-[6px]"></div>
        </aside>

        <!-- Work area -->
        <div class="flex-1 ml-[3px] flex flex-col">
            <div class="flex-1 flex">
                <div class="relative flex-1 bg-[#212830] overflow-hidden">
                    <p class="absolute left-px top-[3px] text-[#dfe3e8]">[−][Top][2D Wireframe]</p>
                    <svg id="model" class="w-full h-[319px]" viewBox="213 111 726 319" preserveAspectRatio="xMinYMin" fill="none">
                        <!-- Trunk road slopes -->
                        <path d="M435 314l10 3-1 12-6 12-7 12-11 0-2-8 1-10 5-9 5-4z" fill="#76696a" stroke="#c04fc4" stroke-dasharray="2 1"/>
                        <path d="M437 320l-12 30M442 320l-13 30" stroke="#a9745c" stroke-width="1.200" stroke-dasharray="1 1"/>
                        <path d="M420 352c-2 8-1 13 3 18l5 13 10 1 14-3-18-11-6-10 0-10z" fill="#5f665c" stroke="#a94fd0" stroke-width=".8" stroke-dasharray="2 1"/>
                        <path d="M453 388l14-1 5-1 5-9 8 4-5 15 11 9-2 9-22-8-3-5z" fill="#75707a" stroke="#a94fd0" stroke-width=".9" stroke-dasharray="2 1"/>
                        <path d="M474 238c-6 12-12 28-16 40-6 14-13 26-18 40-6 14-14 28-17 36-3 12 6 22 18 28 14 8 30 12 48 28" stroke="#6e4d8c" stroke-width="8" opacity=".45"/>
                        <path d="M468 240c-4 12-8 24-12 36M460 290c-6 10-10 18-14 26" stroke="#4c8a4c" stroke-width="1.500"/>
                        <path d="M474 240c-4 12-8 24-12 40l-8 18" stroke="#a9a06a" stroke-width="1.200" stroke-dasharray="2 1"/>
                        <path d="M420 350c-2 14 8 26 20 30l16 9 12 8 20 12" stroke="#4fa04a" stroke-width="1.300"/>
                        <path d="M474 238c-6 12-12 28-16 40-6 14-13 26-18 40-6 14-14 28-17 36-3 12 6 22 18 28 14 8 30 12 48 28" stroke="#20505f" stroke-width="4"/>
                        <path d="M474 238c-6 12-12 28-16 40-6 14-13 26-18 40-6 14-14 28-17 36-3 12 6 22 18 28 14 8 30 12 48 28" stroke="#2e7cc4" stroke-width="2"/>
                        <path d="M474 238c-6 12-12 28-16 40-6 14-13 26-18 40-6 14-14 28-17 36-3 12 6 22 18 28 14 8 30 12 48 28" stroke="#29c59e" stroke-width=".7"/>
                        <path d="M452 274l-1 10M453 276l-2 8" stroke="#c8494f" stroke-width="1.500"/>
                        <path d="M440 379l7 3" stroke="#e0494f" stroke-width="1.500"/>
                        <path d="M473 394l6 2-1 6-6-2z" stroke="#c04fe0"/>
                        <path d="M481 379l-6 14" stroke="#2d74bc" stroke-width="1.500" stroke-dasharray="1.500 1"/>
                        <!-- Cross ticks along the trunk -->
                        <path d="M421 357c2 12 10 20 20 25 14 8 30 12 50 29" stroke="#2a6cb4" stroke-width="15" stroke-dasharray=".7 3.300" opacity=".6"/>
                        <path d="M455 282L444 308" stroke="#2a6cb4" stroke-width="13" stroke-dasharray=".7 3.300" opacity=".5"/>
                        <!-- Loop ramp -->
                        <path d="M440 193c8 8 16 8 24 8 14 0 20 8 20 18 0 8-5 16-10 24" stroke="#76667c" stroke-width="6.500"/>
                        <path d="M440 193c8 8 16 8 24 8 14 0 20 8 20 18 0 8-5 16-10 24" stroke="#2c6656" stroke-width="4.500"/>
                        <path d="M440 193c8 8 16 8 24 8 14 0 20 8 20 18 0 8-5 16-10 24" stroke="#6fa78e" stroke-width="1" stroke-dasharray="2 1"/>
                        <path d="M471 226c-8-2-12-8-10-15 3-8 16-8 18 2 1 9-6 18-10 24" stroke="#8a3aa6" stroke-width="4" stroke-dasharray="2 1"/>
                        <path d="M471 226c-8-2-12-8-10-15 3-8 16-8 18 2 1 9-6 18-10 24" stroke="#31634e" stroke-width="2.200"/>
                        <path d="M482 212c3 8 0 16-6 24" stroke="#2d78c8" stroke-width="1.200"/>
                        <!-- Main carriageway -->
                        <path d="M377 117l38 47 30 39 25 34 28 34 27 35 20 24 14 12" stroke="#2fae6e" stroke-width="7"/>
                        <path d="M377 117l38 47 30 39 25 34 28 34 27 35 20 24 14 12" stroke="#1d5a5b" stroke-width="5.500"/>
                        <path d="M377 117l38 47 30 39 25 34 28 34 27 35 20 24 14 12" stroke="#2ec69a" stroke-width="3.400"/>
                        <path d="M377 117l38 47 30 39 25 34 28 34 27 35 20 24 14 12" stroke="#22606f" stroke-width="2"/>
                        <path d="M377 117l38 47 30 39 25 34 28 34 27 35 20 24 14 12" stroke="#22c4c9" stroke-width=".8"/>
                        <path d="M418 168l5 7M434 192l9 13M482 248l10 13M503 281l8 10M532 311l6 8" stroke="#4a58d8" stroke-width="2" opacity=".8"/>
                        <path d="M481 240l14 20M500 279l12 12" stroke="#9a3cd8" stroke-width="1.200"/>
                        <path d="M555 338l7 2 2 2-3 6-6-3z" fill="#6a5a4a" stroke="#3fc86e"/>
                        <path d="M562 344l10 6" stroke="#cdbfbf"/>
                        <path d="M494 281l5 3 1-3" stroke="#3fa860" stroke-width="1.500"/>
                        <!-- White ramps -->
                        <path d="M446 209c8 10 17 19 18 28 1 12-1 20-4 30" stroke="#7040a4" stroke-width="4"/>
                        <path d="M446 209c8 10 17 19 18 28 1 12-1 16-3 20" stroke="#e4ebe8" stroke-width="1.800" stroke-dasharray="2 1"/>
                        <path d="M464 272c4-8 10-12 18-11 8 1 12 7 17 13" stroke="#3f7c48" stroke-width="5"/>
                        <path d="M467 269c4-6 10-7 15-7 6 1 10 5 14 10" stroke="#f2f6f4" stroke-width="2" stroke-dasharray="2.500 1"/>
                        <!-- Sample lines -->
                        <path d="M488 196l-21 21M475 217l22 1M482 227l11 5M480 232l11 5M449 246l13 3M456 236l8 2M445 259l14 4M445 266l29 12M432 297l28 13M427 307l29 14M408 349l30 8M508 262l-22 22M477 376l10 5M493 404l-7 12" stroke="#2d74bc" stroke-width=".9"/>
                        <!-- UCS icon -->
                        <path d="M221.500 388v28M225 419.500h27M218.500 416.500h6v6h-6zM221 419.500h1" stroke="#c9cdd2"/>
                        <path d="M222.500 379.500l3.500 4 3.500-4M226 383.500v4M254.500 411l8 8M262.500 411l-8 8" stroke="#d9dde2"/>
                        <!-- Section sheets -->
                        <g id="sheets"></g>
                        <!-- View cube -->
                        <circle cx="902" cy="147.500" r="23.500" stroke="#4b525b" stroke-width="5"/>
                        <path d="M891 136h22v23h-22z" fill="#b4b6ba"/><path d="M895 140.500h14v14h-14z" fill="#a3a8b3"/>
                        <g fill="#d0d3d7" font-family="Liberation Sans, sans-serif" font-size="9" font-weight="bold" text-anchor="middle">
                            <text x="902" y="126">N</text><text x="902" y="176">S</text><text x="877" y="151">W</text><text x="927" y="151">E</text>
                        </g>
                        <text x="902" y="150" fill="#333a44" font-family="Liberation Sans, sans-serif" font-size="5" font-weight="bold" text-anchor="middle">TOP</text>
                        <rect x="887" y="187" width="28" height="10" rx="2.500" fill="#9a9daa"/>
                        <text x="890" y="194" fill="#dfe1e6" font-family="Liberation Sans, sans-serif" font-size="6">WCS</text>
                        <path d="M908 190.500h4l-2 3z" stroke="#c9ccd4" stroke-width=".8"/>
                        <path d="M933 196h3M933 199.500h3M933 203h3M937 195.500v1.500M937 199v1.500M937 202.500v1.500" stroke="#e5533f" stroke-width="1.500"/>
                        <!-- Navigation bar -->
                        <rect x="917.500" y="211.500" width="21" height="130" rx="2" fill="#62686d" stroke="#7a8085"/>
                        <g stroke="#454b51">
                            <circle cx="934" cy="215" r="2"/><circle cx="928" cy="229" r="6.500"/><circle cx="928" cy="229" r="3"/><path d="M922 236l3-3"/>
                            <path d="M921 255l3 2.500v-7l2 0v4-6l2-1v6l2-5v6l2-4 1 1-1 8-3 5h-4z" stroke-width=".9"/>
                            <path d="M921 266l10 11M931 266l-10 11M921 269v-3h3M921 274v3h3M931 269v-3h-3"/><circle cx="932" cy="276" r="3"/><path d="M934 278l2 3"/>
                            <path d="M928 290v13M921 297h14M926 292l2-3 2 3M926 301l2 3 2-3M924 293l-3 4 3 4M932 293l3 4-3 4"/>
                            <path d="M921 316h4v4h-4zM926 316h4v4h-4zM931 316h4v4h-4zM921 321h10v9h-10z"/><path d="M925 323l4 2.500-4 2.500z" fill="#454b51"/>
                            <circle cx="934" cy="338" r="2"/>
                            <path d="M926.500 241.500h3l-1.500 1.500zM926.500 285h3l-1.500 1.500zM926.500 308.500h3l-1.500 1.500z" fill="#454b51"/>
                        </g>
                        <!-- Cursor -->
                        <path d="M902 415.500h22M928 415.500h11M926.500 391v22M926.500 418v12M924.500 413.500h4v4h-4z" stroke="#c9cdd2"/>
                    </svg>
                </div>
                <div id="strip" class="w-[18px] h-[319px] overflow-hidden bg-[#323b4a] border-l border-[#2a3240] flex flex-col items-center gap-[3px] pt-px">
                    <div class="shrink-0 w-[9px] h-[2px] border-y border-dotted border-[#78818e]"></div>
                </div>
            </div>

            <!-- Command line -->
            <div class="relative flex mt-px bg-[#2d3543] border-t border-[#59616d] font-['DejaVu_Sans_Mono',monospace]">
                <div class="w-[15px] flex flex-col items-center pt-[3px] gap-[5px]">
                    <div class="w-[10px] h-[3px] border-y border-dotted border-[#c8cdd4]"></div>
                    <button aria-label="Close command line"><svg class="size-[7px] text-white block"><use href="#close"/></svg></button>
                    <svg class="size-[10px]" viewBox="0 0 10 10"><path d="M1 9l5-5" stroke="#fff" stroke-width="2"/><path d="M5 2l3-2v2h2l-1 3-3 1z" fill="#fff"/></svg>
                </div>
                <div class="flex-1">
                    <div class="h-6 bg-[#c6c6c6] text-[#202020] overflow-hidden flex flex-col justify-end pl-[2px]">
                        <p class="shrink-0">Command:</p>
                        <p class="shrink-0">REGEN</p>
                        <p class="shrink-0">Regenerating model.</p>
                    </div>
                    <div class="h-3 bg-white border-t border-[#8f959d] flex items-center pl-[2px] gap-[2px] text-[#555]">
                        <svg class="w-[10px] h-2" viewBox="0 0 10 8"><path d="M.5.5h9v7h-9zM.5 2h9M2 4l1 1-1 1M4 6h2" fill="none" stroke="#777" stroke-width=".8"/></svg>
                        <svg class="w-1 h-[3px]"><use href="#caret"/></svg>
                        <input type="text" aria-label="Command" placeholder="Type a command" class="flex-1 h-[10px] pl-[3px] italic outline-none placeholder:text-[#777]">
                    </div>
                </div>
                <!-- Station tooltip -->
                <div class="absolute right-[30px] -top-[2px] w-[163px] h-[26px] bg-[#e3e3e3]/90 shadow text-[#6c6c6c] font-['Open_Sans','Noto_Sans',sans-serif] pl-[7px] pr-[6px]">
                    <table class="w-full leading-[13px] whitespace-nowrap">
                        <tr><td class="w-[15px]"><svg class="size-[9px]" viewBox="0 0 9 9"><path d="M1 2h3c5 0 5 5 0 5H2" fill="none" stroke="#9fc0dc" stroke-dasharray="2 1"/></svg></td><td class="w-[32px]">Akses</td><td class="w-[20px]">SO</td><td>1+363.70m</td><td class="text-right">3179.425m</td></tr>
                        <tr><td><svg class="size-[9px]" viewBox="0 0 9 9"><path d="M1 2h3c5 0 5 5 0 5H2" fill="none" stroke="#9fc0dc" stroke-dasharray="2 1"/></svg></td><td>Ramp 4</td><td>SO</td><td>0+099.78m</td><td class="text-right">3207.182m</td></tr>
                    </table>
                </div>
            </div>
            <div class="h-[3px]"></div>
        </div>
    </main>

    <!-- Status bar -->
    <footer class="h-[20px] pt-px flex items-start justify-between whitespace-nowrap bg-[#222832]">
        <nav class="h-[15px] flex items-center pl-[10px]">
            <button aria-label="Layouts"><svg class="w-[11px] h-[9px]"><use href="#menu"/></svg></button>
            <button class="w-[43px] h-[15px] ml-[5px] bg-[#3b4453] text-white font-bold [clip-path:polygon(7px_0,100%_0,36px_100%,0_100%)]">Model</button>
            <button class="w-[27px] ml-[5px] text-left">Layout1</button>
            <svg class="w-[6px] h-[10px] ml-[3px]"><use href="#slash"/></svg>
            <button class="w-[27px] ml-[5px] text-left">Layout2</button>
            <svg class="w-[6px] h-[10px] ml-[3px]"><use href="#slash"/></svg>
            <button class="ml-[5px]" aria-label="New layout"><svg class="size-[9px]"><use href="#plus"/></svg></button>
            <svg class="w-[6px] h-[10px] ml-[5px]"><use href="#slash"/></svg>
        </nav>
        <div class="h-[15px] flex items-stretch text-white">
            <button class="w-[29px] mr-px bg-[#3b4453]">MODEL</button>
            <button class="w-4 bg-[#3b4453] flex items-center justify-center" aria-label="Grid"><svg class="size-[11px]"><use href="#s-grid"/></svg></button>
            <button class="w-[26px] mr-px bg-[#3b4453] flex items-center gap-[5px] pl-px" aria-label="Snap"><svg class="size-3"><use href="#s-snap"/></svg><svg class="w-1 h-[3px]"><use href="#caret"/></svg></button>
            <button class="w-4 bg-[#3b4453] flex items-center justify-center" aria-label="Ortho"><svg class="size-[11px]"><use href="#s-ortho"/></svg></button>
            <button class="w-[24px] bg-[#3b4453] flex items-center gap-[5px]" aria-label="Polar"><svg class="size-[11px]"><use href="#s-polar"/></svg><svg class="w-1 h-[3px]"><use href="#caret"/></svg></button>
            <button class="w-[25px] bg-[#3b4453] flex items-center gap-[5px] pl-[2px]" aria-label="Isodraft"><svg class="size-[10px]"><use href="#s-iso"/></svg><svg class="w-1 h-[3px]"><use href="#caret"/></svg></button>
            <button class="w-[14px] mr-px bg-[#5089bf] flex items-center justify-center" aria-label="Tracking"><svg class="size-[11px]"><use href="#s-track"/></svg></button>
            <button class="w-[14px] bg-[#5089bf] flex items-center justify-center" aria-label="Object snap"><svg class="size-[11px]"><use href="#s-osnap"/></svg></button>
            <button class="w-[11px] mr-[2px] bg-[#3b4453] flex items-center justify-center" aria-label="Snap options"><svg class="w-1 h-[3px]"><use href="#caret"/></svg></button>
            <button class="w-[14px] bg-[#5089bf] flex items-center justify-center" aria-label="Annotation visibility"><svg class="size-[10px]"><use href="#s-ann2"/></svg></button>
            <button class="w-[15px] bg-[#3b4453] flex items-center justify-center" aria-label="Auto scale"><svg class="size-[10px]"><use href="#s-ann2"/></svg></button>
            <button class="w-[15px] bg-[#3b4453] flex items-center justify-center" aria-label="Annotation scale"><svg class="size-[10px]"><use href="#s-ann"/></svg></button>
            <button class="w-[29px] bg-[#3b4453] flex items-center justify-end gap-[3px]">1:100 <svg class="w-1 h-[3px]"><use href="#caret"/></svg></button>
            <button class="w-[24px] bg-[#3b4453] flex items-center justify-center gap-[5px]" aria-label="Workspace"><svg class="size-[11px]"><use href="#gear"/></svg><svg class="w-1 h-[3px]"><use href="#caret"/></svg></button>
            <button class="w-[15px] mr-px bg-[#3b4453] flex items-center justify-center" aria-label="Add"><svg class="size-[9px]"><use href="#plus"/></svg></button>
            <button class="w-4 mr-px bg-[#3b4453] flex items-center justify-center" aria-label="Units"><svg class="size-[11px]"><use href="#s-units"/></svg></button>
            <button class="w-[42px] bg-[#3b4453] flex items-center gap-[5px] pl-px"><svg class="size-[11px]"><use href="#s-elev"/></svg>3.500</button>
            <button class="w-[23px] bg-[#3b4453] flex items-center gap-1 pl-px" aria-label="Isolate objects"><svg class="size-[11px]"><use href="#s-iso2"/></svg><svg class="w-1 h-[3px]"><use href="#caret"/></svg></button>
            <button class="w-[15px] bg-[#5089bf] flex items-center justify-center" aria-label="Labels"><svg class="size-[10px]"><use href="#s-tag"/></svg></button>
            <button class="w-[22px] mr-[2px] bg-[#3b4453] flex items-center justify-center" aria-label="Sync"><svg class="size-[10px]"><use href="#s-cloud"/></svg></button>
            <button class="w-[15px] bg-[#3b4453] flex items-center justify-center" aria-label="Clean screen"><svg class="w-[10px] h-2"><use href="#s-full"/></svg></button>
            <button class="w-4 bg-[#3b4453] flex items-center justify-center" aria-label="Customize"><svg class="w-[10px] h-[9px]"><use href="#menu"/></svg></button>
        </div>
    </footer>
</div>

<script>
    // Ribbon tool columns, "icon:Label:v" where v adds a drop-down arrow
    document.querySelectorAll('[data-tools]').forEach(col => {
        col.dataset.tools.split(' ').forEach(item => {
            const [icon, label, more] = item.split(':');
            const name = label.replace('_', ' ');
            const arrow = more ? '<svg class="w-[3px] h-[2px]"><use href="#caret"/></svg>' : '';
            col.innerHTML += `
                <button class="h-[15px] flex items-center gap-1" aria-label="${name || icon}">
                    <svg class="size-[10px]"><use href="#${icon}"/></svg>${name ? `<span>${name}</span>` : ''}${arrow}
                </button>
            `;
        });
    });

    document.querySelectorAll('[data-icons]').forEach(row => {
        row.dataset.icons.split(' ').forEach(icon => {
            row.innerHTML += `<button aria-label="${icon}"><svg class="block size-[11px]"><use href="#${icon}"/></svg></button>`;
        });
    });

    // Prospector tree: level, icon, label, expandable, warning
    const nodes = [
        [0, 'x-doc', 'Update QTO Corridor IC Cicadas'],
        [1, 'x-points', 'Points', 0],
        [1, 'x-group', 'Point Groups', 1],
        [1, 'x-surf', 'Surfaces', 1, 1],
        [1, 'x-align', 'Alignments', 1],
        [1, 'x-fline', 'Feature Lines', 0],
        [1, 'x-site', 'Sites', 0],
        [1, 'x-catch', 'Catchments', 0],
        [1, 'x-pipe', 'Pipe Networks', 1],
        [1, 'x-pipe', 'Pressure Networks', 0],
        [1, 'x-bridge', 'Bridges', 0],
        [1, 'x-turn', 'Turnouts and Crossovers', 1],
        [1, 'x-corr', 'Corridors', 1, 1],
        [1, 'x-asm', 'Assemblies', 1],
        [1, 'x-sub', 'Subassemblies', 1, 1],
        [1, 'x-inter', 'Intersections', 0],
        [1, 'survey', 'Survey', 1],
        [1, 'x-frame', 'View Frame Groups', 0],
        [0, 'x-data', 'Data Shortcuts []'],
        [1, 'x-surf2', 'Surfaces', 0],
        [1, 'x-align2', 'Alignments', 1]
    ];
    document.getElementById('tree').innerHTML = nodes.map(([level, icon, label, box, warn], i) => `
        <li class="h-3 flex items-center">
            ${level ? `<svg class="w-7 h-3"><use href="#${box ? 't-box' : 't-leaf'}"/></svg>` : '<svg class="w-[15px] h-3"><use href="#t-root"/></svg>'}
            <svg class="size-[10px] text-[#777]"><use href="#${icon}"/></svg>
            ${warn ? '<svg class="size-[10px] ml-[2px]"><use href="#warn"/></svg>' : ''}
            <span class="${level === 0 ? 'ml-[5px]' : 'ml-1'} ${i === 0 ? 'font-bold text-black' : ''}">${label}</span>
        </li>
    `).join('');

    const strip = document.getElementById('strip');
    'r-flag r-flag2 r-nib r-wand r-page r-globe2 r-globe r-pt r-pta r-ptc r-ptq r-img r-prof | r-asm | r-undo r-dot r-ptl | r-base r-tri r-sl r-ln r-dial'.split(' ').forEach(icon => {
        strip.innerHTML += icon === '|'
            ? '<div class="shrink-0 w-3 h-px bg-[#d8dde2]"></div>'
            : `<button class="shrink-0" aria-label="${icon}"><svg class="block size-[11px]"><use href="#${icon}"/></svg></button>`;
    });

    // Section sheets: one letter per sheet (colour of the section), bottom edge and heights per row
    const rows = [
        [271, 'wwgrbwwg', [8, 10, 10, 10, 8, 10, 10, 11]],
        [288, 'GwgrbwbG', [11, 10, 10, 10, 10, 10, 10, 11]],
        [303, 'GgwrbbbG', [10, 10, 10, 10, 10, 10, 10, 10]],
        [319, 'ggrrbwwg', [10, 10, 8, 10, 10, 10, 8, 10]],
        [334, 'gGrrbbwb', [10, 10, 10, 10, 10, 10, 10, 10]],
        [349, 'gGrrbbbw', [9, 9, 9, 9, 9, 9, 9, 9]],
        [367, 'bGrgbwG', [9, 10, 10, 9, 10, 10, 12]],
        [383, 'wgrbwwG', [8, 10, 10, 8, 10, 10, 11]]
    ];
    const tops = { w: '#a9b0b4', g: '#4f9e62', G: '#3fc04a', r: '#d0383c', b: '#4a93b4' };
    function sheet(left, bottom, h, kind) {
        const x = left + 0.5;
        const b = bottom + 0.5;
        const y = b - 4.5;
        const hill = kind === 'r'
            ? `<path d="M${x + 0.5} ${y - 2}l5 1h7M${x + 0.5} ${y}h12" stroke="#c8383c"/>`
            : `<path d="M${x + 0.5} ${y}l3 ${kind === 'G' ? -2 : -1}h6l3 2z" fill="${tops[kind]}"/>`;
        return `<path d="M${x} ${b - h}h13v${h}h-13z" fill="#28203a" stroke="#7c2a98"/>
            <path d="M${x + 0.5} ${y}h12v4h-12z" fill="#b0b0b5"/>
            <path d="M${x + 0.5} ${y + 2}h12M${x + 4.5} ${y}v4M${x + 8.5} ${y}v4" stroke="#98929c" stroke-width=".6"/>${hill}`;
    }
    let sheets = sheet(662, 217, 9, 'w');
    rows.forEach(([bottom, kinds, heights]) => {
        [...kinds].forEach((kind, i) => {
            sheets += sheet(656 + Math.round(i * 18.86), bottom, heights[i], kind);
        });
    });
    document.getElementById('sheets').innerHTML = sheets;
</script>
</body>
</html>
